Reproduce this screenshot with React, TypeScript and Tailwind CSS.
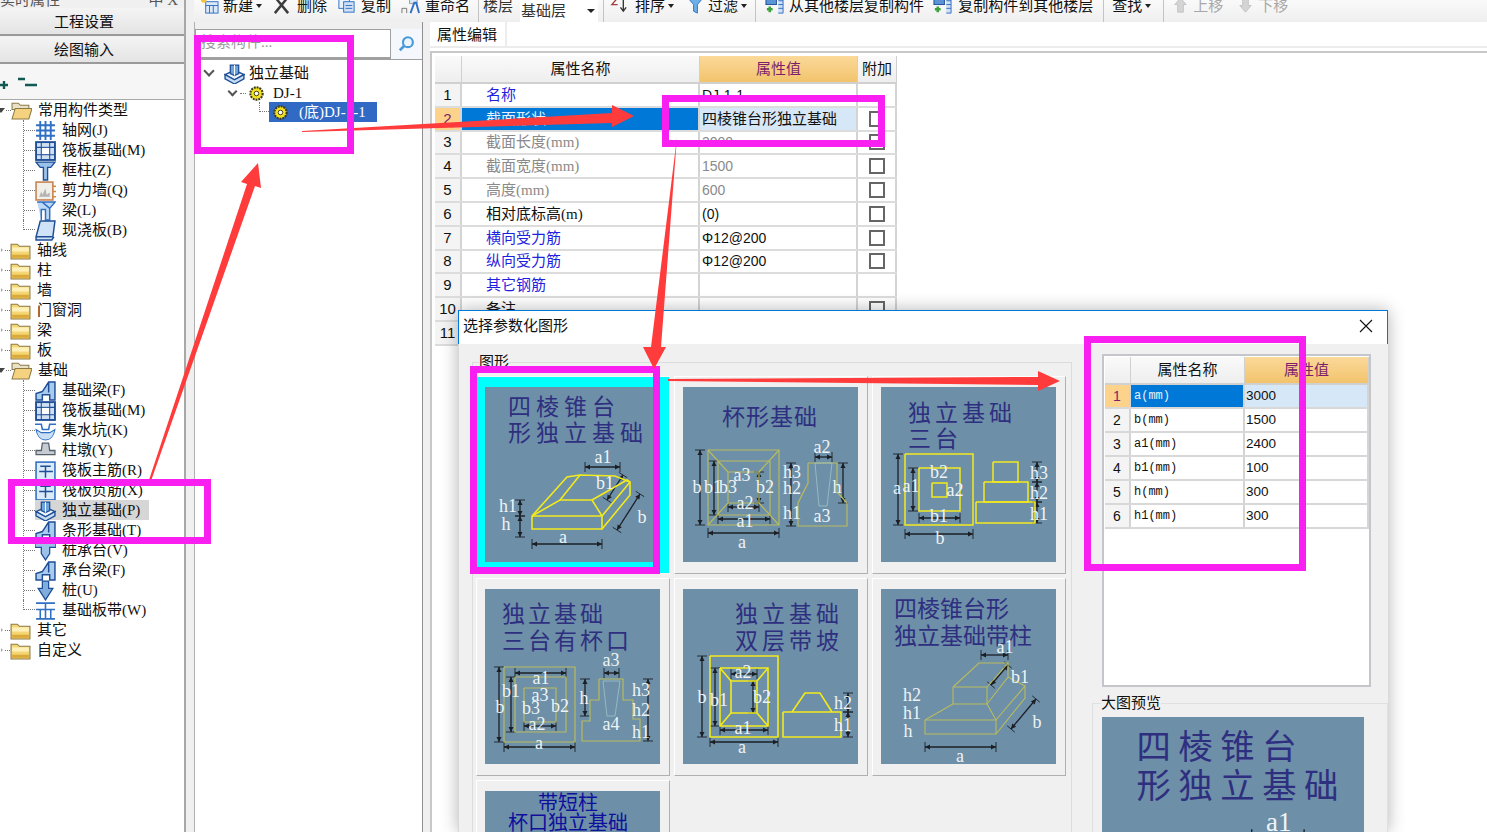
import type { ReactNode } from 'react';

type Pt = [number, number];
type Dimension = [number, number, number, number];
type Label = [string, number, number];

type Figure = {
    titles: { text: string; x: number; y: number; size: number; spacing: number; color?: string }[];
    color: string;
    weight: number;
    shapes: string[];
    thin?: string[];
    dims: Dimension[];
    labels: Label[];
};

const rect = (x1: number, y1: number, x2: number, y2: number) => `${x1},${y1} ${x2},${y1} ${x2},${y2} ${x1},${y2} ${x1},${y1}`;

const TITLE = '#2f2f80';
const OLIVE = '#b9bb5c';
const YELLOW = '#f2ea1c';

const figures: Record<string, Figure> = {
    frustum: {
        titles: [
            { text: '四棱锥台', x: 23, y: 28, size: 23, spacing: 5, color: TITLE },
            { text: '形独立基础', x: 23, y: 54, size: 23, spacing: 5, color: TITLE },
        ],
        color: YELLOW,
        weight: 1.6,
        shapes: [
            rect(47, 129, 117, 142),
            '47,129 82,90 95,88 130,89 145,95 145,108 117,142',
            '47,129 75,113 107,113 117,129',
            '75,113 95,88',
            '107,113 142,93 145,95',
            '117,129 145,95',
        ],
        dims: [
            [47, 157, 117, 157],
            [100, 80, 135, 80],
            [35, 113, 35, 129],
            [35, 129, 35, 150],
            [122, 113, 138, 88],
            [132, 143, 155, 107],
        ],
        labels: [['a1', 118, 76], ['b1', 120, 102], ['h1', 23, 125], ['h', 21, 143], ['b', 157, 136], ['a', 78, 156]],
    },
    cup: {
        titles: [{ text: '杯形基础', x: 39, y: 38, size: 23, spacing: 1, color: TITLE }],
        color: OLIVE,
        weight: 1.2,
        shapes: [
            rect(25, 63, 96, 138),
            rect(35, 74, 87, 128),
            rect(45, 85, 76, 116),
            '25,63 45,85',
            '96,63 76,85',
            '25,138 45,116',
            '96,138 76,116',
            '125,76 154,76 154,105 164,116 164,139 115,139 115,116 125,96 125,76',
        ],
        thin: ['132,76 149,76 144,119 136,119 132,76'],
        dims: [
            [17, 63, 17, 138],
            [31, 74, 31, 128],
            [76, 85, 76, 116],
            [25, 146, 96, 146],
            [35, 132, 87, 132],
            [45, 120, 76, 120],
            [132, 70, 149, 70],
            [160, 76, 160, 116],
            [108, 76, 108, 139],
        ],
        labels: [['a2', 139, 66], ['h3', 109, 91], ['h2', 109, 107], ['h1', 109, 132], ['h', 154, 106], ['a3', 139, 135], ['b', 14, 106], ['b1', 30, 106], ['b3', 45, 106], ['b2', 82, 106], ['a3', 59, 94], ['a2', 62, 122], ['a1', 62, 140], ['a', 59, 161]],
    },
    triple: {
        titles: [
            { text: '独立基础', x: 27, y: 34, size: 23, spacing: 4, color: TITLE },
            { text: '三台', x: 27, y: 60, size: 23, spacing: 4, color: TITLE },
        ],
        color: YELLOW,
        weight: 1.5,
        shapes: [
            rect(24, 67, 92, 138),
            rect(38, 81, 79, 124),
            rect(51, 96, 66, 110),
            rect(112, 75, 137, 95),
            rect(103, 95, 147, 115),
            rect(95, 115, 154, 136),
        ],
        dims: [
            [17, 67, 17, 138],
            [32, 81, 32, 124],
            [38, 131, 79, 131],
            [24, 147, 92, 147],
            [156, 75, 156, 95],
            [156, 95, 156, 115],
            [156, 115, 156, 136],
        ],
        labels: [['a', 16, 107], ['a1', 30, 105], ['b2', 58, 91], ['a2', 74, 109], ['b1', 58, 135], ['b', 59, 157], ['h3', 158, 92], ['h2', 158, 112], ['h1', 158, 133]],
    },
    tripleCup: {
        titles: [
            { text: '独立基础', x: 17, y: 33, size: 23, spacing: 3, color: TITLE },
            { text: '三台有杯口', x: 17, y: 60, size: 23, spacing: 3, color: TITLE },
        ],
        color: OLIVE,
        weight: 1.2,
        shapes: [
            rect(19, 78, 90, 153),
            rect(30, 88, 81, 143),
            rect(39, 99, 71, 133),
            '114,90 138,90 138,111 148,111 148,130 155,130 155,152 97,152 97,132 105,132 105,111 114,111 114,90',
        ],
        thin: ['118,92 135,92 130,127 122,127 118,92'],
        dims: [
            [14, 78, 14, 153],
            [26, 88, 26, 143],
            [30, 84, 81, 84],
            [39, 137, 71, 137],
            [19, 158, 90, 158],
            [100, 90, 100, 127],
            [119, 84, 134, 84],
            [163, 90, 163, 152],
        ],
        labels: [['a3', 126, 77], ['a1', 56, 95], ['b1', 26, 108], ['a3', 55, 112], ['b', 15, 124], ['b3', 46, 125], ['b2', 75, 123], ['a2', 52, 141], ['a', 54, 160], ['h', 99, 115], ['h3', 156, 107], ['h2', 156, 127], ['h1', 156, 149], ['a4', 126, 141]],
    },
    slope: {
        titles: [
            { text: '独立基础', x: 52, y: 33, size: 23, spacing: 4, color: TITLE },
            { text: '双层带坡', x: 52, y: 60, size: 23, spacing: 4, color: TITLE },
        ],
        color: YELLOW,
        weight: 1.6,
        shapes: [
            rect(27, 67, 95, 148),
            rect(37, 79, 85, 137),
            rect(48, 92, 74, 124),
            '37,79 48,92',
            '85,79 74,92',
            '37,137 48,124',
            '85,137 74,124',
            rect(100, 123, 158, 148),
            '109,123 122,104 137,104 149,123',
        ],
        dims: [
            [19, 67, 19, 148],
            [32, 79, 32, 137],
            [48, 85, 74, 85],
            [70, 92, 70, 124],
            [37, 141, 85, 141],
            [27, 153, 95, 153],
            [165, 104, 165, 123],
            [165, 123, 165, 148],
        ],
        labels: [['a2', 60, 89], ['b', 19, 114], ['b1', 36, 117], ['b2', 79, 114], ['a1', 60, 145], ['a', 59, 164], ['h2', 160, 120], ['h1', 160, 142]],
    },
    column: {
        titles: [
            { text: '四棱锥台形', x: 13, y: 28, size: 23, spacing: 0, color: TITLE },
            { text: '独立基础带柱', x: 13, y: 55, size: 23, spacing: 0, color: TITLE },
        ],
        color: OLIVE,
        weight: 1.1,
        shapes: [
            rect(44, 131, 115, 145),
            rect(72, 98, 106, 115),
            '72,98 98,74 127,74 106,98',
            '127,74 127,88 106,115',
            '44,131 72,115',
            '115,131 106,115',
            '115,131 144,97 144,109 115,145',
            '127,88 144,97',
        ],
        dims: [
            [44, 158, 115, 158],
            [100, 66, 127, 66],
            [110, 96, 127, 76],
            [130, 140, 155, 110],
        ],
        labels: [['a1', 124, 64], ['b1', 139, 94], ['h2', 31, 112], ['h1', 31, 130], ['h', 27, 148], ['b', 156, 139], ['a', 79, 173]],
    },
    shortColumn: {
        titles: [
            { text: '带短柱', x: 53, y: 19, size: 20, spacing: 0, color: '#0f0f9c' },
            { text: '杯口独立基础', x: 23, y: 39, size: 20, spacing: 0, color: '#0f0f9c' },
        ],
        color: OLIVE,
        weight: 1.2,
        shapes: [],
        dims: [],
        labels: [],
    },
};

function DimLine({ d }: { d: Dimension }) {
    const [x1, y1, x2, y2] = d;
    const len = Math.hypot(x2 - x1, y2 - y1);
    const ux = (x2 - x1) / len;
    const uy = (y2 - y1) / len;
    const head = (p: Pt, s: number) =>
        `${p[0]},${p[1]} ${p[0] + s * ux * 5 - uy * 2.5},${p[1] + s * uy * 5 + ux * 2.5} ${p[0] + s * ux * 5 + uy * 2.5},${p[1] + s * uy * 5 - ux * 2.5}`;
    return (
        <g>
            <line x1={x1} y1={y1} x2={x2} y2={y2} stroke="#1b1f24" strokeWidth={1.3} />
            <line x1={x1 + uy * 5} y1={y1 - ux * 5} x2={x1 - uy * 5} y2={y1 + ux * 5} stroke="#1b1f24" strokeWidth={0.9} />
            <line x1={x2 + uy * 5} y1={y2 - ux * 5} x2={x2 - uy * 5} y2={y2 + ux * 5} stroke="#1b1f24" strokeWidth={0.9} />
            <polygon points={head([x1, y1], 1)} fill="#1b1f24" />
            <polygon points={head([x2, y2], -1)} fill="#1b1f24" />
        </g>
    );
}

function Diagram({ name, large }: { name: string; large?: boolean }) {
    const fig = figures[name];
    return (
        <svg viewBox="0 0 175 175" className={large ? 'block h-[262px] w-[262px] flex-none bg-[#6d8fa8]' : 'block h-[175px] w-[175px] flex-none bg-[#6d8fa8]'}>
            {fig.titles.map((t) => (
                <text key={t.text} x={t.x} y={t.y} fontSize={t.size} letterSpacing={t.spacing} fill={t.color} fontFamily="'Noto Sans CJK SC', sans-serif">
                    {t.text}
                </text>
            ))}
            {fig.dims.map((d, i) => (
                <DimLine key={i} d={d} />
            ))}
            {fig.shapes.map((s, i) => (
                <polyline key={i} points={s} fill="none" stroke={fig.color} strokeWidth={fig.weight} />
            ))}
            {fig.thin?.map((s, i) => (
                <polyline key={i} points={s} fill="none" stroke="#9fc4c8" strokeWidth={0.8} />
            ))}
            {fig.labels.map(([text, x, y], i) => (
                <text key={i} x={x} y={y} fontSize={18} textAnchor="middle" fill="#eef3f6" fontFamily="'Liberation Serif', serif">
                    {text}
                </text>
            ))}
        </svg>
    );
}

// small tree and toolbar icons
function Icon({ kind, big }: { kind: string; big?: boolean }) {
    const blue = '#2f6fc4';
    const dark = '#1f4f96';
    let body: ReactNode = null;
    switch (kind) {
        case 'folder':
            body = (
                <>
                    <path d="M1 4h6l2 2h10v12H1z" fill="#f4d675" stroke="#8c7a45" />
                    <path d="M2 7h16v4H2z" fill="#fff0b8" />
                    <path d="M2 14h16v3H2z" fill="#dba93a" />
                </>
            );
            break;
        case 'open':
            body = (
                <>
                    <path d="M1 3h6l2 2h8v4H1z" fill="#e9e2c8" stroke="#8c7a45" />
                    <path d="M1 18 4 8h16l-3 10z" fill="#f4d280" stroke="#8c7a45" />
                </>
            );
            break;
        case 'grid':
            body = <path d="M5 1v18M10 1v18M15 1v18M1 5h18M1 10h18M1 15h18" stroke={blue} strokeWidth={1.8} fill="none" />;
            break;
        case 'raft':
            body = (
                <>
                    <rect x="1" y="2" width="18" height="17" fill="#cfe0f4" stroke={dark} strokeWidth={1.8} />
                    <rect x="6" y="7" width="8" height="7" fill="#fff" stroke={dark} />
                    <path d="M1 7h5M14 7h5M1 14h5M14 14h5M6 2v5M14 2v5M6 14v5M14 14v5" stroke={dark} />
                </>
            );
            break;
        case 'column':
            body = <path d="M1 2h18l-4 5h-3v12H8V7H5z" fill="#9cc2ea" stroke={dark} strokeWidth={1.3} />;
            break;
        case 'wall':
            body = (
                <>
                    <rect x="1" y="2" width="16" height="17" fill="#f1efe9" stroke="#c98a5a" strokeWidth={1.6} />
                    <path d="M4 16l2-5 1 3 3-6 1 6 3-2v4z" fill="#b3b3b3" />
                    <path d="M17 6h3M17 11h3M17 16h3" stroke="#e08a30" strokeWidth={1.3} />
                </>
            );
            break;
        case 'beam':
            body = <path d="M2 2h17l-5 6v11h-4V9H6v10M14 8 7 2" fill="#bcd8f2" stroke={blue} strokeWidth={1.4} />;
            break;
        case 'slab':
            body = <path d="M5 1h14l-2 15H1z M1 16v3h15l2-3" fill="#cfe2f7" stroke={dark} strokeWidth={1.4} />;
            break;
        case 'fbeam':
            body = <path d="M1 19v-6l6-2 6-9h6v17h-5v-5H7v5zM13 2v10" fill="#a9cbee" stroke={dark} strokeWidth={1.4} />;
            break;
        case 'pit':
            body = (
                <>
                    <path d="M0 4h6l1 5h6l1-5h6" fill="none" stroke={blue} strokeWidth={1.5} />
                    <path d="M1 9c1 7 5 10 9 10s8-3 9-10l-5 3H6z" fill="#c9dff5" stroke={blue} />
                </>
            );
            break;
        case 'pier':
            body = <path d="M7 3h6l1 7h5v4H1v-4h5z" fill="#c6ccd2" stroke="#55606c" strokeWidth={1.2} />;
            break;
        case 'rebar':
            body = (
                <>
                    <rect x="1" y="2" width="18" height="17" fill="#dcebfa" stroke={blue} strokeWidth={1.5} />
                    <path d="M4 11h13M10 6v11M5 6h10" stroke={dark} strokeWidth={1.4} fill="none" />
                </>
            );
            break;
        case 'iso':
            body = (
                <>
                    <path d="M1 11 10 7l9 4-9 5z" fill="#eef5fc" stroke={dark} strokeWidth={1.3} />
                    <path d="M1 11v4l9 5 9-5v-4l-9 5z" fill="#c5dcf3" stroke={dark} strokeWidth={1.3} />
                    <path d="M6 2h8v8l-4 2-4-2z" fill="#6ea3dc" stroke={dark} strokeWidth={1.2} />
                    <path d="M10 2v10" stroke="#fff" strokeWidth={1} />
                </>
            );
            break;
        case 'cap':
            body = <path d="M0 3h20v4h-6v6l-4 6-4-6V7H0z" fill="#9cc2ea" stroke={dark} strokeWidth={1.2} />;
            break;
        case 'pile':
            body = <path d="M7 1h6v7h4l-7 11L3 8h4z" fill="#7fadde" stroke={dark} strokeWidth={1.2} />;
            break;
        case 'strip':
            body = <path d="M1 3h18M1 18h18M1 9h18M5 9v9M10 3v15M15 9v9" stroke={blue} strokeWidth={1.5} fill="none" />;
            break;
        case 'gear':
            body = (
                <>
                    <circle cx="10" cy="10" r="6.5" fill="#f3e21d" stroke="#3a3a1a" strokeWidth={2.2} strokeDasharray="2 1" />
                    <circle cx="10" cy="10" r="2.4" fill="#fff" stroke="#3a3a1a" />
                </>
            );
            break;
        case 'new':
            body = (
                <>
                    <rect x="6" y="6" width="13" height="12" fill="#dbe8f7" stroke={blue} />
                    <path d="M6 10h13M10 10v8M14 10v8" stroke={blue} />
                    <circle cx="4" cy="4" r="3" fill="#f2c537" />
                </>
            );
            break;
        case 'delete':
            body = <path d="M3 1l14 17M17 1 3 18" stroke="#3d3d3d" strokeWidth={2.6} />;
            break;
        case 'copy':
            body = (
                <>
                    <rect x="2" y="2" width="11" height="11" fill="#eaf2fb" stroke={blue} />
                    <rect x="7" y="6" width="11" height="11" fill="#cfe0f4" stroke={blue} />
                    <path d="M9 10h7M9 13h7" stroke={blue} />
                </>
            );
            break;
        case 'rename':
            body = (
                <>
                    <path d="M9 1h8v7h-8z" fill="#dbe8f7" stroke="#999" />
                    <path d="M10 18l4-11h2l3 11" fill="none" stroke={blue} strokeWidth={2} />
                    <path d="M1 18v-5h5v5" fill="none" stroke="#777" />
                </>
            );
            break;
        case 'sort':
            body = (
                <>
                    <path d="M2 2h6L2 9h6" fill="none" stroke="#a23b3b" strokeWidth={1.4} />
                    <path d="M14 2v13M11 12l3 4 3-4" fill="none" stroke="#333" strokeWidth={1.4} />
                </>
            );
            break;
        case 'filter':
            body = <path d="M2 2h16l-6 7v9l-4-2V9z" fill="#6fb0e6" stroke={blue} />;
            break;
        case 'floors':
            body = (
                <>
                    <rect x="1" y="1" width="11" height="8" fill="#5b94d6" stroke={dark} />
                    <path d="M5 11v6M2 14h6" stroke="#3aa23a" strokeWidth={2.6} />
                    <path d="M14 1h5v17h-5M14 5h5M14 9h5M14 13h5" fill="#cfe0f4" stroke={blue} />
                </>
            );
            break;
        case 'up':
            body = <path d="M10 2l6 7h-3v8H7V9H4z" fill="#d4d4d4" stroke="#c4c4c4" />;
            break;
        case 'down':
            body = <path d="M10 17l6-7h-3V2H7v8H4z" fill="#d4d4d4" stroke="#c4c4c4" />;
            break;
    }
    return (
        <svg viewBox="0 0 20 20" className={big ? 'h-[21px] w-[21px] flex-none' : 'h-[19px] w-[19px] flex-none'}>
            {body}
        </svg>
    );
}

const Caret = () => <span className="ml-[3px] inline-block h-0 w-0 flex-none border-x-[3px] border-t-[4px] border-x-transparent border-t-[#222]" />;
const Sep = ({ className }: { className: string }) => <span className={`h-[22px] flex-none self-start border-l border-[#c4c4c4] ${className}`} />;

function TreeLeaf({ icon, label, last, active }: { icon: string; label: string; last?: boolean; active?: boolean }) {
    return (
        <div className="flex h-5 items-center pl-[23px]">
            {last ? (
                <span className="h-1/2 w-[12px] flex-none self-start border-b border-l border-dotted border-[#777]" />
            ) : (
                <span className="flex h-full w-[12px] flex-none items-center border-l border-dotted border-[#777]">
                    <span className="w-full border-t border-dotted border-[#777]" />
                </span>
            )}
            <span className={active ? 'flex h-5 items-center bg-[#d6d6d6] pr-[9px]' : 'flex h-5 items-center'}>
                <Icon kind={icon} big />
                <span className="ml-[6px] whitespace-nowrap">{label}</span>
            </span>
        </div>
    );
}

function TreeGroup({ label, open }: { label: string; open?: boolean }) {
    return (
        <div className="flex h-5 items-center">
            {open ? (
                <span className="ml-[-3px] h-0 w-0 flex-none border-x-[4px] border-t-[5px] border-x-transparent border-t-[#444]" />
            ) : (
                <span className="ml-[1px] h-0 w-0 flex-none border-y-[2px] border-l-[2px] border-y-transparent border-l-[#aaa]" />
            )}
            <span className={open ? 'ml-[1px] w-[5px] flex-none border-t border-dotted border-[#777]' : 'ml-[2px] w-[5px] flex-none border-t border-dotted border-[#777]'} />
            <Icon kind={open ? 'open' : 'folder'} big />
            <span className="ml-[6px] whitespace-nowrap">{label}</span>
        </div>
    );
}

const commonItems = [
    ['grid', '轴网(J)'],
    ['raft', '筏板基础(M)'],
    ['column', '框柱(Z)'],
    ['wall', '剪力墙(Q)'],
    ['beam', '梁(L)'],
    ['slab', '现浇板(B)'],
];

const foundationItems = [
    ['fbeam', '基础梁(F)'],
    ['raft', '筏板基础(M)'],
    ['pit', '集水坑(K)'],
    ['pier', '柱墩(Y)'],
    ['rebar', '筏板主筋(R)'],
    ['rebar', '筏板负筋(X)'],
    ['iso', '独立基础(P)'],
    ['fbeam', '条形基础(T)'],
    ['cap', '桩承台(V)'],
    ['fbeam', '承台梁(F)'],
    ['pile', '桩(U)'],
    ['strip', '基础板带(W)'],
];

const propRows = [
    { name: '名称', tone: 'link', value: 'DJ-1-1', check: false },
    { name: '截面形状', tone: 'selected', value: '四棱锥台形独立基础', check: true },
    { name: '截面长度(mm)', tone: 'muted', value: '3000', check: true },
    { name: '截面宽度(mm)', tone: 'muted', value: '1500', check: true },
    { name: '高度(mm)', tone: 'muted', value: '600', check: true },
    { name: '相对底标高(m)', tone: 'plain', value: '(0)', check: true },
    { name: '横向受力筋', tone: 'link', value: 'Φ12@200', check: true },
    { name: '纵向受力筋', tone: 'link', value: 'Φ12@200', check: true },
    { name: '其它钢筋', tone: 'link', value: '', check: false },
    { name: '备注', tone: 'plain', value: '', check: true },
    { name: '', tone: 'plain', value: '', check: false },
];

const paramRows = [
    ['a(mm)', '3000'],
    ['b(mm)', '1500'],
    ['a1(mm)', '2400'],
    ['b1(mm)', '100'],
    ['h(mm)', '300'],
    ['h1(mm)', '300'],
];

const cards = ['frustum', 'cup', 'triple', 'tripleCup', 'slope', 'column', 'shortColumn'];

const nameTone: Record<string, string> = {
    link: 'text-[#1f1fe0]',
    muted: 'text-[#8a8a8a]',
    plain: 'text-[#111]',
    selected: 'bg-[#0078d7] text-[#e8f2fb]',
};

const headerCell = 'flex items-center justify-center border-r border-b-2 border-[#d0d0d0] bg-gradient-to-b from-[#fafafa] to-[#eeeeee]';
const valueHeader = 'flex items-center justify-center border-r border-b-2 border-[#d0d0d0] bg-gradient-to-b from-[#fbd999] to-[#f2c36c] text-[#7b1f6b]';

export default function App() {
    return (
        <div className="relative flex h-[832px] w-[1487px] overflow-hidden bg-[#f0f0f0] font-['Liberation_Serif','Noto_Sans_CJK_SC',sans-serif] text-[15px] leading-5 text-[#111]">
            {/* left column */}
            <div className="flex w-[186px] flex-none flex-col border-r-2 border-[#a8a8a8]">
                <div className="flex h-[8px] items-end justify-between overflow-hidden pr-[6px] leading-none text-[#555]">
                    <span>实时属性</span>
                    <span>中 X</span>
                </div>
                <button className="h-[28px] border-b-2 border-[#9a9a9a] bg-gradient-to-b from-[#f4f4f4] to-[#e4e4e4] pr-[16px] pt-[2px]">工程设置</button>
                <button className="mt-[1px] h-[27px] border-b-2 border-[#9a9a9a] bg-gradient-to-b from-[#f4f4f4] to-[#e4e4e4] pr-[16px]">绘图输入</button>
                <div className="flex h-[35px] flex-none items-center bg-[#f6f6f6] pt-[3px]">
                    <svg viewBox="0 0 40 16" className="h-[16px] w-[40px]">
                        <path d="M-1 10h9M4 6v8" stroke="#0f5a52" strokeWidth={2.4} />
                        <path d="M18 4h7M25 10h12" stroke="#0f5a52" strokeWidth={2.4} />
                    </svg>
                </div>
                <div className="flex-1 overflow-hidden border-t border-[#a8a8a8] bg-white">
                    <TreeGroup label="常用构件类型" open />
                    {commonItems.map(([icon, label], i) => (
                        <TreeLeaf key={label} icon={icon} label={label} last={i === commonItems.length - 1} />
                    ))}
                    {['轴线', '柱', '墙', '门窗洞', '梁', '板'].map((g) => (
                        <TreeGroup key={g} label={g} />
                    ))}
                    <TreeGroup label="基础" open />
                    {foundationItems.map(([icon, label], i) => (
                        <TreeLeaf key={label + i} icon={icon} label={label} last={i === foundationItems.length - 1} active={label === '独立基础(P)'} />
                    ))}
                    <TreeGroup label="其它" />
                    <TreeGroup label="自定义" />
                </div>
            </div>

            <div className="ml-[8px] flex min-w-0 flex-1 flex-col">
                {/* toolbar, cut off by the top of the picture */}
                <div className="h-[22px] flex-none overflow-hidden bg-gradient-to-b from-[#fafafa] to-[#efefef]">
                    <div className="flex h-[11px] items-center whitespace-nowrap">
                        <span className="ml-[6px] flex-none"><Icon kind="new" /></span>
                        <span className="ml-[4px]">新建</span>
                        <Caret />
                        <span className="ml-[10px] flex-none"><Icon kind="delete" /></span>
                        <span className="ml-[6px]">删除</span>
                        <span className="ml-[10px] flex-none"><Icon kind="copy" /></span>
                        <span className="ml-[5px]">复制</span>
                        <span className="ml-[10px] flex-none"><Icon kind="rename" /></span>
                        <span className="ml-[5px]">重命名</span>
                        <Sep className="ml-[8px]" />
                        <span className="ml-[4px] text-[#333]">楼层</span>
                        <span className="ml-[7px] flex h-[22px] w-[78px] flex-none items-center self-start bg-white pl-[1px] text-[#333]">
                            基础层
                            <span className="ml-auto mr-[3px] h-0 w-0 border-x-[4px] border-t-[4px] border-x-transparent border-t-[#222]" />
                        </span>
                        <Sep className="ml-[5px]" />
                        <span className="ml-[6px] flex-none"><Icon kind="sort" /></span>
                        <span className="ml-[6px]">排序</span>
                        <Caret />
                        <span className="ml-[12px] flex-none"><Icon kind="filter" /></span>
                        <span className="ml-[3px]">过滤</span>
                        <Caret />
                        <Sep className="ml-[8px]" />
                        <span className="ml-[9px] flex-none"><Icon kind="floors" /></span>
                        <span className="ml-[5px]">从其他楼层复制构件</span>
                        <span className="ml-[9px] flex-none"><Icon kind="floors" /></span>
                        <span className="ml-[6px]">复制构件到其他楼层</span>
                        <Sep className="ml-[10px]" />
                        <span className="ml-[8px]">查找</span>
                        <Caret />
                        <Sep className="ml-[12px]" />
                        <span className="ml-[7px] flex-none"><Icon kind="up" /></span>
                        <span className="ml-[3px] text-[#a8a8a8]">上移</span>
                        <span className="ml-[13px] flex-none"><Icon kind="down" /></span>
                        <span className="ml-[3px] text-[#a8a8a8]">下移</span>
                    </div>
                </div>

                <div className="flex min-h-0 flex-1">
                    {/* component list */}
                    <div className="flex w-[229px] flex-none flex-col border-x border-x-[#b0b0b0] border-r-[#909090] pt-[7px]">
                        <div className="flex h-[30px] flex-none">
                            <div className="w-[196px] flex-none border border-b-2 border-[#a0a0a0] bg-white px-[5px] pt-[2px] text-[#9a9a9a]">搜索构件...</div>
                            <div className="flex flex-1 items-center justify-center bg-[#f4f7fb]">
                                <svg viewBox="0 0 20 20" className="h-[18px] w-[18px]">
                                    <circle cx="11" cy="8" r="5.5" fill="#eaf4fc" stroke="#4a9ad8" strokeWidth={2.4} />
                                    <path d="M7 12l-5 5" stroke="#4a9ad8" strokeWidth={3} />
                                </svg>
                            </div>
                        </div>
                        <div className="flex-1 border-t border-[#a0a0a0] bg-white pt-[2px]">
                            <div className="flex h-[22px] items-center pl-[10px]">
                                <span className="h-[8px] w-[8px] -translate-y-[2px] rotate-45 border-r-2 border-b-2 border-[#555]" />
                                <span className="ml-[11px] flex-none"><Icon kind="iso" big /></span>
                                <span className="ml-[4px]">独立基础</span>
                            </div>
                            <div className="flex h-[18px] items-center pl-[34px]">
                                <span className="h-[7px] w-[7px] -translate-y-[2px] rotate-45 border-r-2 border-b-2 border-[#555]" />
                                <span className="ml-[4px] w-[6px] border-t border-dotted border-[#777]" />
                                <span className="ml-[1px] flex-none"><Icon kind="gear" /></span>
                                <span className="ml-[7px]">DJ-1</span>
                            </div>
                            <div className="flex h-[20px] items-center pl-[64px]">
                                <span className="h-1/2 w-[10px] flex-none self-start border-b border-l border-dotted border-[#777]" />
                                <span className="flex h-[20px] w-[108px] flex-none items-center bg-[#316ac5] pl-[2px] text-white">
                                    <Icon kind="gear" />
                                    <span className="ml-[9px] whitespace-nowrap">(底)DJ-1-1</span>
                                </span>
                            </div>
                        </div>
                    </div>

                    {/* property editor */}
                    <div className="ml-[7px] flex min-w-0 flex-1 flex-col bg-white">
                        <div className="flex h-[26px] flex-none border-b-2 border-[#ececec]">
                            <div className="w-[77px] border-r-2 border-[#ececec] pl-[7px] pt-[3px]">属性编辑</div>
                        </div>
                        <div className="mt-[3px] flex-1 border-t-2 border-l-2 border-[#c8c8c8] pl-[3px] pt-[3px]">
                            <div className="w-[462px]">
                                <div className="grid h-[28px] grid-cols-[27px_238px_158px_39px]">
                                    <div className={headerCell} />
                                    <div className={headerCell}>属性名称</div>
                                    <div className={valueHeader}>属性值</div>
                                    <div className={headerCell}>附加</div>
                                </div>
                                {propRows.map((r, i) => {
                                    const selected = r.tone === 'selected';
                                    return (
                                        <div key={i} className="grid h-[23.8px] grid-cols-[27px_238px_158px_39px] border-b-2 border-[#dcdcdc]">
                                            <div className={selected ? "flex items-center justify-center border-r-2 border-[#d4d4d4] bg-[#fdd28a] font-['Liberation_Sans'] text-[#7b1f6b]" : "flex items-center justify-center border-r-2 border-[#d4d4d4] bg-[#f4f4f4] font-['Liberation_Sans']"}>{i + 1}</div>
                                            <div className={`flex items-center border-r-2 border-[#d4d4d4] pl-[24px] ${nameTone[r.tone]}`}>{r.name}</div>
                                            <div className={selected ? 'flex items-center border-r-2 border-[#d4d4d4] bg-[#d6e8f7] pl-[2px]' : i > 1 && i < 5 ? "flex items-center border-r-2 border-[#d4d4d4] pl-[2px] font-['Liberation_Sans'] text-[14px] text-[#8a8a8a]" : "flex items-center border-r-2 border-[#d4d4d4] pl-[2px] font-['Liberation_Sans'] text-[14px]"}>{r.value}</div>
                                            <div className="flex items-center justify-center border-r-2 border-[#d4d4d4]">
                                                {r.check && <span className="h-[16px] w-[16px] border-2 border-[#666]" />}
                                            </div>
                                        </div>
                                    );
                                })}
                            </div>
                        </div>
                    </div>
                </div>
            </div>

            {/* parametric shape dialog */}
            <div className="absolute left-[458px] top-[310px] flex h-[522px] w-[930px] flex-col bg-[#f0f0f0] shadow-[0_0_16px_rgba(0,0,0,0.3)]">
                <div className="flex h-[34px] flex-none items-center justify-between border-x border-t border-[#0078d7] bg-white pb-[3px] pl-[4px] pr-[14px]">
                    <span>选择参数化图形</span>
                    <svg viewBox="0 0 14 14" className="h-[14px] w-[14px]">
                        <path d="M1 1l12 12M13 1 1 13" stroke="#111" strokeWidth={1.1} />
                    </svg>
                </div>
                <div className="flex min-h-0 flex-1 overflow-hidden border-l border-[#d8d8d8] pl-[13px] pt-[8px]">
                    <fieldset className="h-[600px] w-[600px] flex-none border border-[#dcdcdc] pl-[3px] pt-[4px]">
                        <legend className="ml-[3px] h-5">图形</legend>
                        <div className="grid grid-cols-[194px_194px_194px] gap-x-[4px] gap-y-[4px]">
                            {cards.map((c, i) => (
                                <div key={c} className={i === 0 ? 'h-[198px] border border-[#f6f6f6] bg-[#00ffff] pl-[8px] pt-[10px]' : 'h-[198px] border border-t-white border-l-white border-r-[#b0b0b0] border-b-[#b0b0b0] bg-[#f0f0f0] pl-[8px] pt-[10px]'}>
                                    <Diagram name={c} />
                                </div>
                            ))}
                        </div>
                    </fieldset>
                    <div className="ml-[20px] flex min-w-0 flex-1 flex-col">
                        <div className="ml-[10px] mt-[2px] h-[333px] w-[269px] flex-none border-2 border-[#c4c6cc] bg-white pl-[1px] pt-[1px]">
                            <div className="w-[264px]">
                                <div className="grid h-[28px] grid-cols-[26px_114px_124px]">
                                    <div className={headerCell} />
                                    <div className={headerCell}>属性名称</div>
                                    <div className={valueHeader}>属性值</div>
                                </div>
                                {paramRows.map(([name, value], i) => (
                                    <div key={name} className="grid h-[24px] grid-cols-[26px_114px_124px] border-b-2 border-[#d8d8d8] text-[14px]">
                                        <div className={i === 0 ? "flex items-center justify-center border-r-2 border-[#d4d4d4] bg-[#fdd28a] font-['Liberation_Sans'] text-[#7b1f6b]" : "flex items-center justify-center border-r-2 border-[#d4d4d4] bg-[#f4f4f4] font-['Liberation_Sans']"}>{i + 1}</div>
                                        <div className={i === 0 ? "flex items-center border-r-2 border-[#d4d4d4] bg-[#0078d7] pl-[3px] font-['Liberation_Mono'] text-[12px] text-[#e8f2fb]" : "flex items-center border-r-2 border-[#d4d4d4] pl-[3px] font-['Liberation_Mono'] text-[12px]"}>{name}</div>
                                        <div className={i === 0 ? "flex items-center border-r-2 border-[#d4d4d4] bg-[#d6e8f7] pl-[1px] font-['Liberation_Sans'] text-[13.5px]" : "flex items-center border-r-2 border-[#d4d4d4] pl-[1px] font-['Liberation_Sans'] text-[13.5px]"}>{value}</div>
                                    </div>
                                ))}
                            </div>
                        </div>
                        <fieldset className="mt-[6px] h-[200px] border border-[#e0e0e0] pl-[9px] pt-[4px]">
                            <legend className="ml-[-1px] h-5">大图预览</legend>
                            <Diagram name="frustum" large />
                        </fieldset>
                    </div>
                </div>
            </div>

            {/* annotations drawn over the screenshot */}
            <div className="absolute left-[470px] top-[366px] h-[208px] w-[190px] border-[7px] border-[#f81ff0]" />
            <svg viewBox="0 0 1487 832" className="pointer-events-none absolute left-0 top-0 h-[832px] w-[1487px]">
                <polygon points="149,480 247,184 241,182 258,163 261,188 255,186 151,481" fill="#ff3b3b" />
                <polygon points="302,131 612,113 612,105 634,116 612,127 612,123 302,132" fill="#ff3b3b" />
                <polygon points="677,137 661,347 666,347 654,369 643,347 651,347" fill="#ff3b3b" />
                <polygon points="668,379 1038,377 1038,371 1060,381 1038,391 1038,385 668,381" fill="#ff3b3b" />
            </svg>
            <div className="absolute left-[194px] top-[35px] h-[119px] w-[160px] border-[7px] border-[#f81ff0]" />
            <div className="absolute left-[8px] top-[479px] h-[65px] w-[203px] border-[7px] border-[#f81ff0]" />
            <div className="absolute left-[662px] top-[95px] h-[52px] w-[223px] border-[7px] border-[#f81ff0]" />
            <div className="absolute left-[1084px] top-[336px] h-[235px] w-[222px] border-[7px] border-[#f81ff0]" />
        </div>
    );
}
